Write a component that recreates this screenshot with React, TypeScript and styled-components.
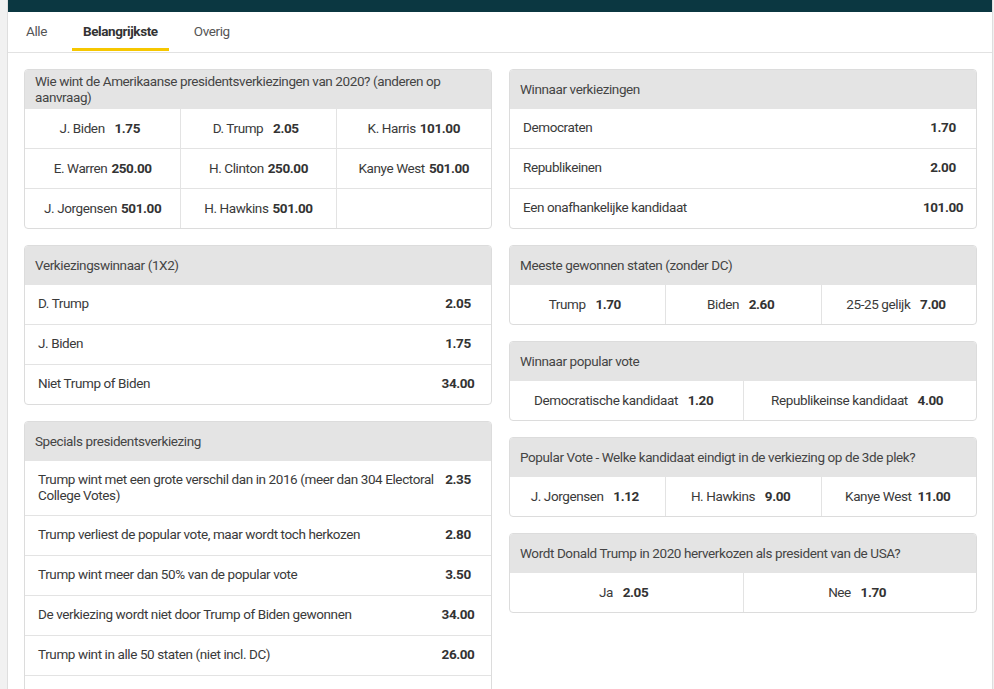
import React from "react";
import styled, { createGlobalStyle } from "styled-components";

const Global = createGlobalStyle`
  html, body { margin: 0; padding: 0; background: #f1f1f1; }
  body {
    font-family: Roboto, "Noto Sans", Arial, sans-serif;
    color: #333;
    font-size: 13.5px;
    letter-spacing: -0.4px;
  }
  * { box-sizing: border-box; }
`;

const Shell = styled.div`
  margin: 0 1px 0 7px;
  border-left: 1px solid #dedede;
  border-right: 1px solid #dedede;
  background: #fff;
  min-height: 100vh;
`;

const TopBar = styled.div`
  height: 12px;
  background: #0b3741;
`;

const Tabs = styled.nav`
  display: flex;
  gap: 14px;
  padding: 0 7px;
  height: 41px;
  border-bottom: 1px solid #e2e2e2;
`;

const Tab = styled.div<{ $active?: boolean }>`
  display: flex;
  align-items: center;
  padding: 2px 11px 0;
  color: ${(p) => (p.$active ? "#333" : "#555")};
  font-weight: ${(p) => (p.$active ? 700 : 400)};
  border-bottom: 3px solid ${(p) => (p.$active ? "#f6c700" : "transparent")};
  margin-bottom: 1px;
`;

const Content = styled.main`
  display: grid;
  grid-template-columns: 1fr 1fr;
  gap: 17px;
  padding: 16px 15px 16px 16px;
  align-items: start;
`;

const Column = styled.div`
  display: flex;
  flex-direction: column;
  gap: 16px;
`;

const Card = styled.section`
  border: 1px solid #dcdcdc;
  border-radius: 4px;
  overflow: hidden;
  background: #fff;
`;

const Header = styled.header`
  display: flex;
  align-items: center;
  min-height: 39px;
  padding: 3px 10px 4px;
  background: #e4e4e4;
  color: #444;
  line-height: 16px;
`;

const Row = styled.div`
  display: flex;
  align-items: flex-start;
  min-height: 40px;
  padding: 10px 12px 12px 13px;
  border-top: 1px solid #e3e3e3;
  line-height: 16px;
  color: #3a3a3a;
  &:first-of-type { border-top: none; min-height: 39px; }
`;

const Label = styled.span`
  flex: 1;
`;

const Odds = styled.span`
  min-width: 42px;
  margin-left: 2px;
  text-align: center;
  font-weight: 700;
  color: #333;
`;

const Grid = styled.div<{ $cols: number }>`
  display: grid;
  grid-template-columns: repeat(${(p) => p.$cols}, 1fr);
`;

const Cell = styled.div<{ $cols: number }>`
  display: flex;
  align-items: center;
  justify-content: center;
  height: 40px;
  padding-bottom: 1px;
  color: #3a3a3a;
  border-left: 1px solid #e3e3e3;
  border-top: 1px solid #e3e3e3;
  &:nth-child(${(p) => p.$cols}n + 1) { border-left: none; }
  &:nth-child(-n + ${(p) => p.$cols}) { border-top: none; height: 39px; }
`;

const CellOdds = styled.b`
  display: inline-block;
  min-width: 37px;
  margin-left: 4px;
  text-align: center;
  font-weight: 700;
  color: #333;
`;

type Pair = [string, string];

const ListCard = ({ title, rows }: { title: string; rows: Pair[] }) => (
  <Card>
    <Header>{title}</Header>
    {rows.map(([l, o]) => (
      <Row key={l}>
        <Label>{l}</Label>
        <Odds>{o}</Odds>
      </Row>
    ))}
  </Card>
);

const GridCard = ({ title, cols, cells }: { title: string; cols: number; cells: (Pair | null)[] }) => (
  <Card>
    <Header>{title}</Header>
    <Grid $cols={cols}>
      {cells.map((c, i) => (
        <Cell $cols={cols} key={i}>
          {c && (
            <>
              {c[0]}
              <CellOdds>{c[1]}</CellOdds>
            </>
          )}
        </Cell>
      ))}
    </Grid>
  </Card>
);

export default function App() {
  return (
    <>
      <Global />
      <Shell>
        <TopBar />
        <Tabs>
          <Tab>Alle</Tab>
          <Tab $active>Belangrijkste</Tab>
          <Tab>Overig</Tab>
        </Tabs>
        <Content>
          <Column>
            <GridCard
              title="Wie wint de Amerikaanse presidentsverkiezingen van 2020? (anderen op aanvraag)"
              cols={3}
              cells={[
                ["J. Biden", "1.75"],
                ["D. Trump", "2.05"],
                ["K. Harris", "101.00"],
                ["E. Warren", "250.00"],
                ["H. Clinton", "250.00"],
                ["Kanye West", "501.00"],
                ["J. Jorgensen", "501.00"],
                ["H. Hawkins", "501.00"],
                null,
              ]}
            />
            <ListCard
              title="Verkiezingswinnaar (1X2)"
              rows={[
                ["D. Trump", "2.05"],
                ["J. Biden", "1.75"],
                ["Niet Trump of Biden", "34.00"],
              ]}
            />
            <ListCard
              title="Specials presidentsverkiezing"
              rows={[
                ["Trump wint met een grote verschil dan in 2016 (meer dan 304 Electoral College Votes)", "2.35"],
                ["Trump verliest de popular vote, maar wordt toch herkozen", "2.80"],
                ["Trump wint meer dan 50% van de popular vote", "3.50"],
                ["De verkiezing wordt niet door Trump of Biden gewonnen", "34.00"],
                ["Trump wint in alle 50 staten (niet incl. DC)", "26.00"],
                ["Kanye West krijgt meer dan 1% van de stemmen in de verkiezing", "11.00"],
              ]}
            />
          </Column>
          <Column>
            <ListCard
              title="Winnaar verkiezingen"
              rows={[
                ["Democraten", "1.70"],
                ["Republikeinen", "2.00"],
                ["Een onafhankelijke kandidaat", "101.00"],
              ]}
            />
            <GridCard
              title="Meeste gewonnen staten (zonder DC)"
              cols={3}
              cells={[
                ["Trump", "1.70"],
                ["Biden", "2.60"],
                ["25-25 gelijk", "7.00"],
              ]}
            />
            <GridCard
              title="Winnaar popular vote"
              cols={2}
              cells={[
                ["Democratische kandidaat", "1.20"],
                ["Republikeinse kandidaat", "4.00"],
              ]}
            />
            <GridCard
              title="Popular Vote - Welke kandidaat eindigt in de verkiezing op de 3de plek?"
              cols={3}
              cells={[
                ["J. Jorgensen", "1.12"],
                ["H. Hawkins", "9.00"],
                ["Kanye West", "11.00"],
              ]}
            />
            <GridCard
              title="Wordt Donald Trump in 2020 herverkozen als president van de USA?"
              cols={2}
              cells={[
                ["Ja", "2.05"],
                ["Nee", "1.70"],
              ]}
            />
          </Column>
        </Content>
      </Shell>
    </>
  );
}
